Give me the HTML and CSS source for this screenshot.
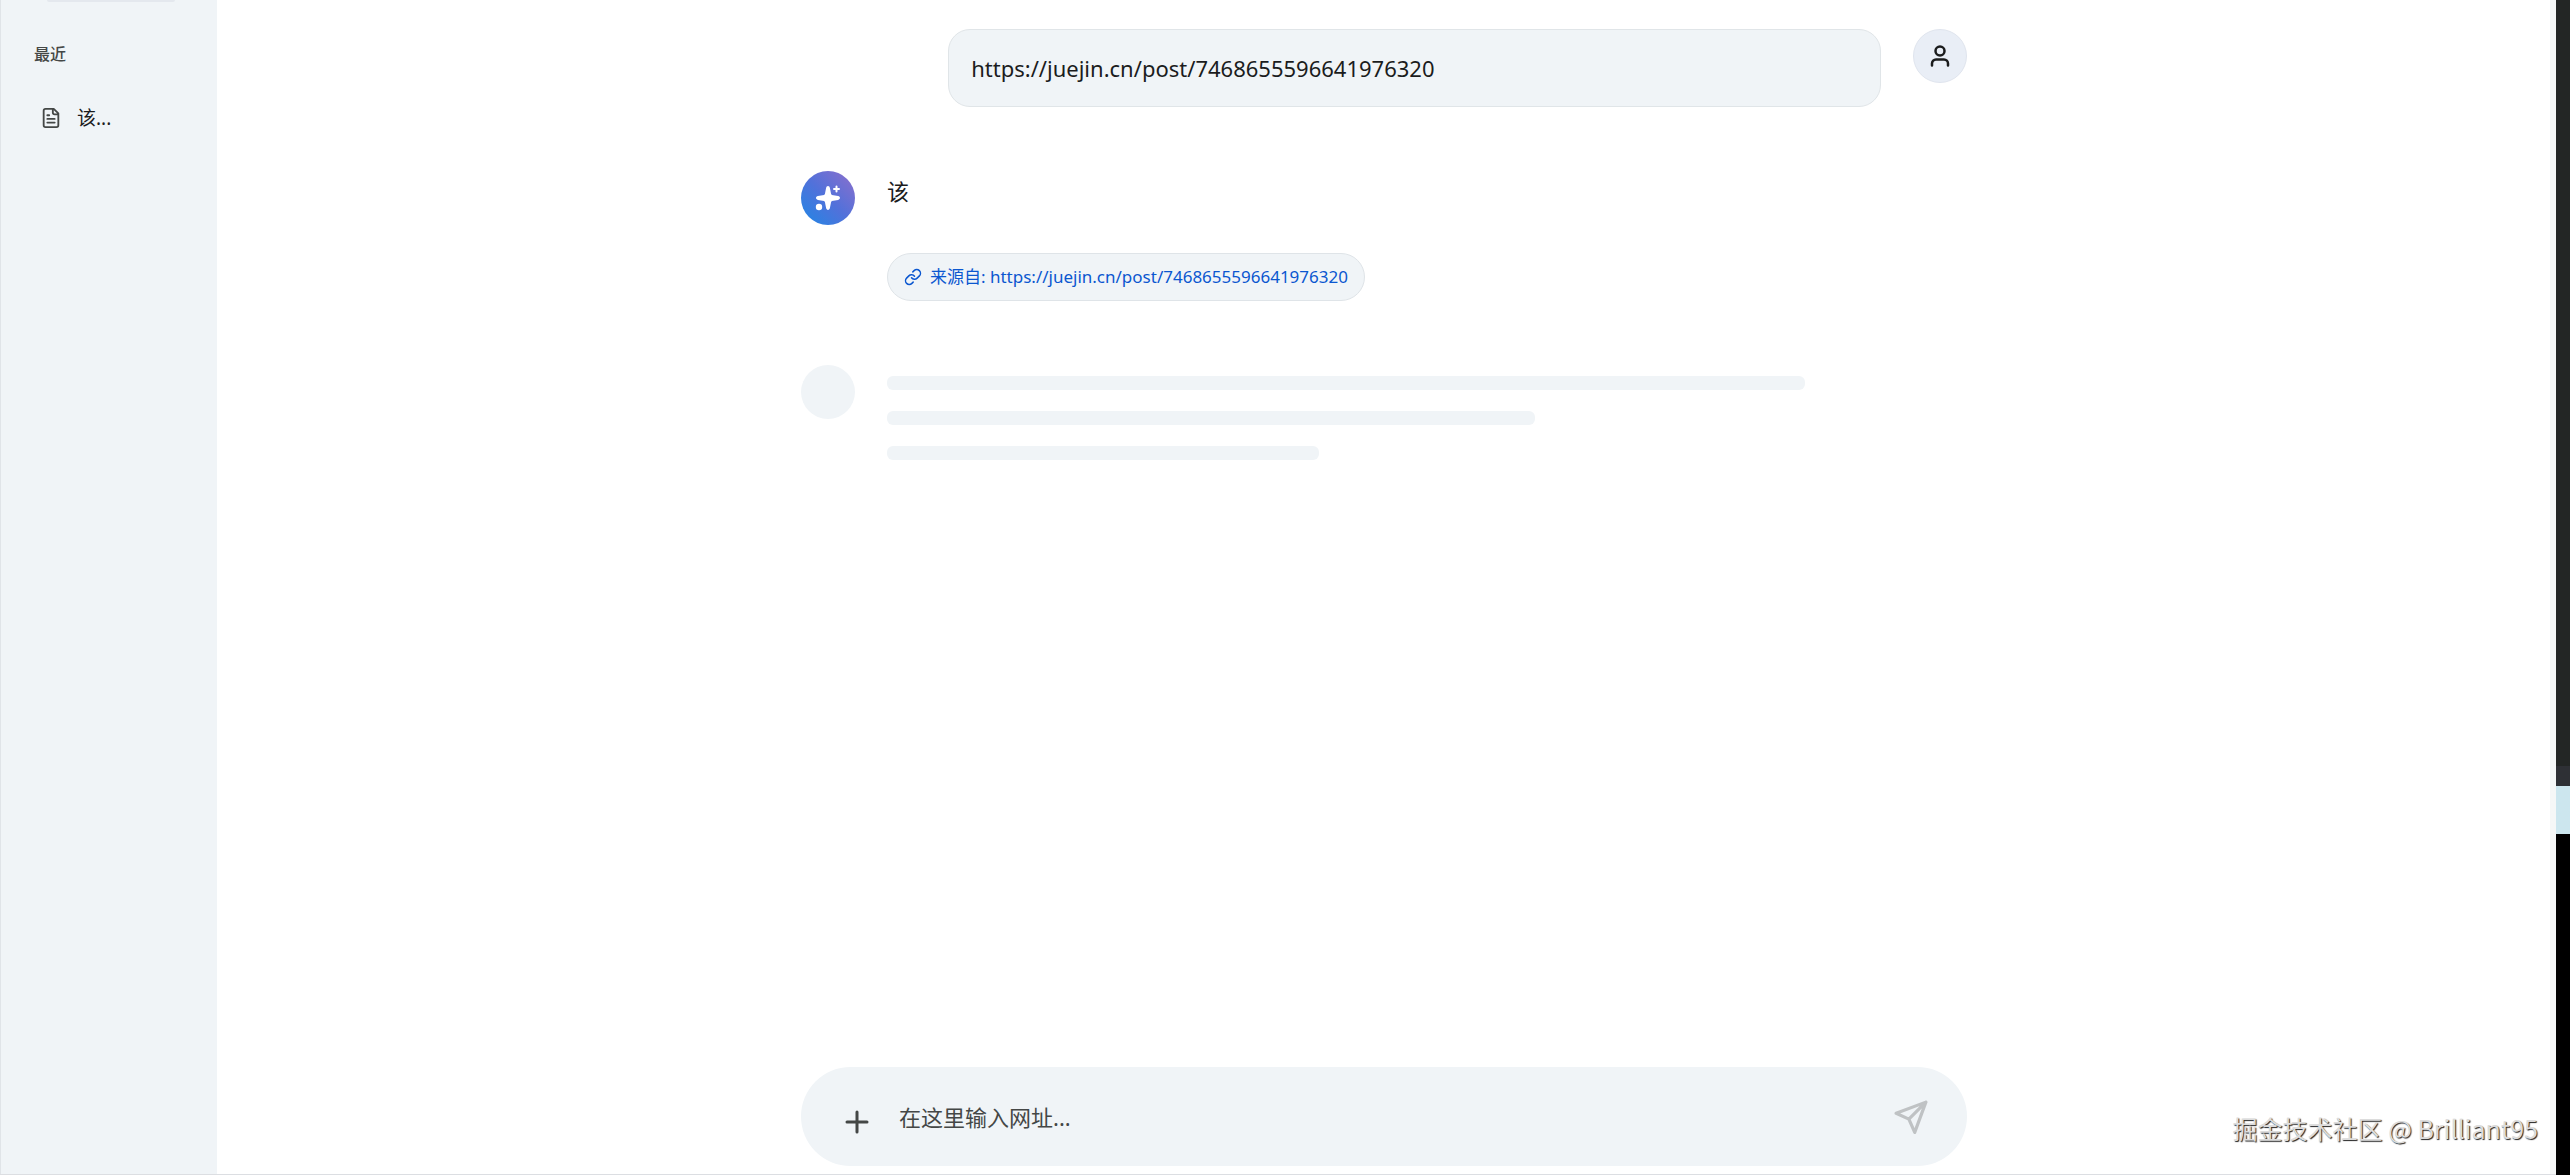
FILE: index.html
```
<!DOCTYPE html>
<html lang="zh-CN">
<head>
    <meta charset="UTF-8">
    <meta name="viewport" content="width=device-width, initial-scale=1.0">
    <title>Chat</title>
    <link rel="stylesheet" href="styles.css">
</head>
<body>
    <div class="app">
        <!-- Sidebar -->
        <aside class="sidebar">
            <div class="sidebar-top"></div>
            <h2 class="sidebar-title">最近</h2>
            <a class="history-item" href="#">
                <svg class="icon-file" viewBox="0 0 24 24">
                    <path d="M14 2v4a2 2 0 0 0 2 2h4M15 2H6a2 2 0 0 0-2 2v16a2 2 0 0 0 2 2h12a2 2 0 0 0 2-2V7zM8 9h2M8 13h8M8 17h8"/>
                </svg>
                <span>该...</span>
            </a>
        </aside>

        <!-- Chat -->
        <main class="main">
            <div class="messages">
                <div class="message user">
                    <div class="bubble">https://juejin.cn/post/7468655596641976320</div>
                    <div class="avatar user-avatar">
                        <svg class="icon-user" viewBox="0 0 24 24">
                            <circle cx="12" cy="7" r="4.5"/>
                            <path d="M4 21.500v-2a4 4 0 0 1 4-4h8a4 4 0 0 1 4 4v2"/>
                        </svg>
                    </div>
                </div>

                <div class="message">
                    <div class="avatar ai-avatar">
                        <svg class="icon-spark" viewBox="0 0 24 24">
                            <path d="M12 0c1 0 1.700.8 1.900 1.900l1.200 6 .8 1 6.200 1.200c2.500.6 2.500 3.200 0 3.800l-6.200 1.200-.8 1-1.200 6C13.700 23.200 13 24 12 24s-1.700-.8-1.900-1.900l-1.200-6-.8-1-6.200-1.200c-2.500-.6-2.500-3.200 0-3.800l6.200-1.200.8-1 1.200-6C10.300.8 11 0 12 0z"/>
                            <circle cx="3" cy="21" r="3.200"/>
                            <path class="spark-plus" d="M20.500 .5v5M18 3h5"/>
                        </svg>
                    </div>
                    <div class="content">
                        <p class="reply">该</p>
                        <a class="source" href="#">
                            <svg class="icon-link" viewBox="0 0 24 24">
                                <path d="M10 13a5 5 0 0 0 7.540.54l3-3a5 5 0 0 0-7.070-7.070l-1.720 1.710M14 11a5 5 0 0 0-7.540-.54l-3 3a5 5 0 0 0 7.070 7.070l1.710-1.710"/>
                            </svg>
                            <span>来源自: https://juejin.cn/post/7468655596641976320</span>
                        </a>
                    </div>
                </div>

                <!-- Loading -->
                <div class="message">
                    <div class="avatar skeleton-avatar"></div>
                    <div class="content skeleton">
                        <div class="line line-long"></div>
                        <div class="line line-medium"></div>
                        <div class="line line-short"></div>
                    </div>
                </div>
            </div>

            <form class="composer">
                <button class="icon-button add-button" type="button" aria-label="添加">
                    <svg class="icon-plus" viewBox="0 0 24 24"><path d="M12 2v20M2 12h20"/></svg>
                </button>
                <input class="url-input" type="text" placeholder="在这里输入网址..." aria-label="在这里输入网址">
                <button class="icon-button send-button" type="submit" aria-label="发送">
                    <svg class="icon-send" viewBox="0 0 32 32"><path d="M30 2 L19.500 30.500 L14 18 L2 12.500 Z M30 2 L14 18"/></svg>
                </button>
            </form>
        </main>

        <div class="scroll-track"></div>
        <div class="edge">
            <div class="edge-dark"></div>
            <div class="edge-grey"></div>
            <div class="edge-blue"></div>
            <div class="edge-black"></div>
        </div>
    </div>
    <div class="watermark">掘金技术社区 @ Brilliant95</div>
</body>
</html>
```
FILE: styles.css
```
* {
    box-sizing: border-box;
}
body {
    margin: 0;
    font-family: "Noto Sans", "Noto Sans CJK SC", sans-serif;
    color: #1b1c1d;
    background-color: #fff;
}
svg {
    display: block;
    fill: none;
    stroke: currentColor;
    stroke-width: 2;
    stroke-linecap: round;
    stroke-linejoin: round;
}
.app {
    display: flex;
    height: 100vh;
    border-bottom: 1px solid #dcdee2;
}

/* Sidebar */
.sidebar {
    flex: none;
    width: 217px;
    padding: 0 20px 0 33px;
    background-color: #f0f4f7;
    border-left: 1px solid #e0e4e8;
}
.sidebar-top {
    height: 2px;
    margin: 0 22px 0 13px;
    border-radius: 0 0 8px 8px;
    background-color: #e4e8ee;
}
.sidebar-title {
    margin: 40px 0 0;
    font-size: 16px;
    line-height: 24px;
    font-weight: 500;
    color: #444746;
}
.history-item {
    display: flex;
    align-items: center;
    gap: 15px;
    margin-top: 37px;
    padding-left: 6px;
    font-size: 19px;
    line-height: 30px;
    color: #1b1c1d;
    text-decoration: none;
}
.icon-file {
    width: 22px;
    height: 22px;
    color: #444746;
}

/* Messages */
.main {
    flex: 1;
    display: flex;
    flex-direction: column;
    align-items: center;
    padding: 29px 0 8px 1px;
}
.messages {
    flex: 1;
    display: flex;
    flex-direction: column;
    gap: 64px;
    width: 50%;
}
.message {
    display: flex;
    gap: 32px;
}
.message.user {
    justify-content: flex-end;
}
.bubble {
    width: 80%;
    padding: 22px;
    border: 1px solid #e0e5e8;
    border-radius: 22px;
    background-color: #f0f4f7;
    font-size: 22px;
    line-height: 32px;
}
.avatar {
    flex: none;
    display: flex;
    align-items: center;
    justify-content: center;
    width: 54px;
    height: 54px;
    border-radius: 50%;
}
.user-avatar {
    border: 1px solid #e0e5ee;
    background-color: #e9eef6;
}
.icon-user {
    width: 24px;
    height: 24px;
    stroke-width: 2.500;
}
.ai-avatar {
    background: linear-gradient(45deg, #1f87e5, #5271da 50%, #8e6fcb);
    color: #fff;
}
.icon-spark {
    width: 24px;
    height: 24px;
    fill: currentColor;
    stroke: none;
    overflow: visible;
}
.spark-plus {
    stroke: currentColor;
    stroke-width: 2;
}
.content {
    flex: 1;
}
.reply {
    margin: 4px 0 46px;
    font-size: 22px;
    line-height: 32px;
}
.source {
    display: inline-flex;
    align-items: center;
    gap: 8px;
    padding: 11px 16px;
    border: 1px solid #dfe4e8;
    border-radius: 24px;
    background-color: #f0f4f7;
    color: #0b57d0;
    font-size: 17px;
    line-height: 24px;
    text-decoration: none;
    vertical-align: top;
}
.icon-link {
    width: 18px;
    height: 18px;
}
.skeleton {
    display: flex;
    flex-direction: column;
    gap: 21px;
    padding-top: 11px;
}
.line {
    height: 14px;
    border-radius: 6px;
    background-color: #f0f4f7;
}
.line-long {
    width: 85%;
}
.line-medium {
    width: 60%;
}
.line-short {
    width: 40%;
}
.skeleton-avatar {
    background-color: #f0f4f7;
}

/* Input bar */
.composer {
    display: flex;
    align-items: center;
    gap: 20px;
    width: 50%;
    height: 99px;
    padding: 22px 34px;
    border-radius: 50px;
    background-color: #f0f4f7;
}
.icon-button {
    display: flex;
    align-items: center;
    justify-content: center;
    width: 44px;
    height: 44px;
    padding: 0;
    border: 0;
    background: none;
}
.add-button {
    align-self: flex-end;
    color: #444746;
}
.send-button {
    color: #bfc2c4;
}
.icon-plus {
    width: 24px;
    height: 24px;
    stroke-width: 3;
}
.icon-send {
    width: 34px;
    height: 34px;
    stroke-width: 3;
}
.url-input {
    flex: 1;
    padding: 0;
    border: 0;
    outline: 0;
    background: none;
    font-family: inherit;
    font-size: 22px;
    line-height: 32px;
}
.url-input::placeholder {
    color: #444746;
    opacity: 1;
}

/* Right edge */
.scroll-track {
    width: 6px;
    background-color: #f5f7f7;
}
.edge {
    display: flex;
    flex-direction: column;
    width: 14px;
    margin-bottom: -1px;
}
.edge-dark {
    flex: 766;
    background-color: #232625;
}
.edge-grey {
    flex: 20;
    background-color: #2e3035;
}
.edge-blue {
    flex: 48;
    background-color: #cce6ee;
}
.edge-black {
    flex: 341;
    background-color: #000;
}
.watermark {
    position: absolute;
    right: 32px;
    bottom: 29px;
    font-family: "Noto Sans CJK SC", sans-serif;
    font-size: 25px;
    line-height: 36px;
    color: #dcdcdc;
    text-shadow: 1px 1px 1px #222;
}
```
